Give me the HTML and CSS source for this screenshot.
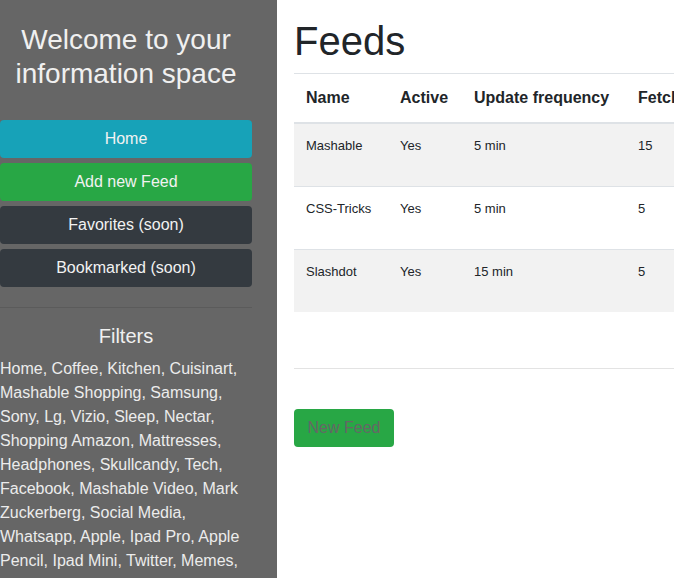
FILE: index.html
```html
<!DOCTYPE html>
<html lang="en">
<head>
<meta charset="utf-8">
<title>Feeds</title>
<link rel="stylesheet" href="styles.css">
</head>
<body>
<div class="app">
  <aside class="sidebar">
    <div class="side-inner">
      <h1 class="welcome">Welcome to your information space</h1>
      <nav class="nav">
        <a class="btn btn-info" href="#">Home</a>
        <a class="btn btn-success" href="#">Add new Feed</a>
        <a class="btn btn-dark" href="#">Favorites (soon)</a>
        <a class="btn btn-dark" href="#">Bookmarked (soon)</a>
      </nav>
      <hr class="side-rule">
      <h5 class="filters-title">Filters</h5>
      <p class="filters">Home, Coffee, Kitchen, Cuisinart, Mashable Shopping, Samsung, Sony, Lg, Vizio, Sleep, Nectar, Shopping Amazon, Mattresses, Headphones, Skullcandy, Tech, Facebook, Mashable Video, Mark Zuckerberg, Social Media, Whatsapp, Apple, Ipad Pro, Apple Pencil, Ipad Mini, Twitter, Memes,</p>
    </div>
  </aside>
  <main class="main">
    <h1 class="page-title">Feeds</h1>
    <table class="feeds">
      <thead>
        <tr>
          <th class="c-name">Name</th>
          <th class="c-active">Active</th>
          <th class="c-freq">Update frequency</th>
          <th class="c-fetch">Fetch count</th>
        </tr>
      </thead>
      <tbody>
        <tr class="odd">
          <td><div class="cell">Mashable</div></td>
          <td><div class="cell">Yes</div></td>
          <td><div class="cell">5 min</div></td>
          <td><div class="cell">15</div></td>
        </tr>
        <tr>
          <td><div class="cell">CSS-Tricks</div></td>
          <td><div class="cell">Yes</div></td>
          <td><div class="cell">5 min</div></td>
          <td><div class="cell">5</div></td>
        </tr>
        <tr class="odd">
          <td><div class="cell">Slashdot</div></td>
          <td><div class="cell">Yes</div></td>
          <td><div class="cell">15 min</div></td>
          <td><div class="cell">5</div></td>
        </tr>
      </tbody>
    </table>
    <div class="table-end"></div>
    <button class="btn btn-success new-feed" type="button">New Feed</button>
  </main>
</div>
</body>
</html>
```
FILE: styles.css
```css
* { box-sizing: border-box; }
html, body {
  margin: 0;
  height: 100%;
  overflow: hidden;
}
body {
  font-family: "Liberation Sans", Arial, sans-serif;
  font-size: 16px;
  line-height: 1.5;
  color: #212529;
  background: #fff;
}
.app {
  display: flex;
  height: 100vh;
}
.sidebar {
  width: 277px;
  flex: 0 0 277px;
  background: #666666;
  color: #ececec;
  overflow: hidden;
}
.side-inner {
  width: 252px;
  padding-top: 23px;
}
.welcome {
  margin: 0;
  font-size: 28px;
  font-weight: 400;
  line-height: 1.2;
  text-align: center;
  color: #f0f0f0;
}
.nav {
  display: flex;
  flex-direction: column;
  gap: 5px;
  margin-top: 30px;
}
.btn {
  display: block;
  font-family: inherit;
  font-size: 16px;
  line-height: 24px;
  padding: 6px 12px;
  border: 1px solid transparent;
  border-radius: 4px;
  text-align: center;
  text-decoration: none;
  color: #fff;
}
.btn-info { background: #17a2b8; color: #f2f2f2; }
.btn-success { background: #28a745; color: #f2f2f2; }
.btn-dark { background: #343a40; color: #f2f2f2; }
.side-rule {
  margin: 20px 0 16px;
  border: 0;
  border-top: 1px solid #5b5b5b;
}
.filters-title {
  margin: 0 0 9px;
  font-size: 20px;
  font-weight: 400;
  line-height: 1.2;
  text-align: center;
  color: #f0f0f0;
}
.filters {
  margin: 0;
  font-size: 16px;
  line-height: 24px;
  color: #ececec;
}
.main {
  flex: 1;
  min-width: 0;
  padding: 17px 0 0 17px;
  overflow: hidden;
}
.page-title {
  margin: 0 0 8px;
  font-size: 40px;
  font-weight: 400;
  line-height: 1.2;
  color: #212529;
}
.feeds {
  border-collapse: collapse;
  table-layout: fixed;
  width: 560px;
}
.feeds th, .feeds td {
  padding: 12px;
  text-align: left;
  vertical-align: top;
  border-top: 1px solid #dee2e6;
}
.feeds th {
  font-weight: 700;
  font-size: 16px;
  line-height: 24px;
  border-bottom: 2px solid #dee2e6;
  white-space: nowrap;
}
.feeds td {
  font-size: 13px;
  line-height: 19.5px;
}
.feeds thead + tbody tr:first-child td { border-top: 0; }
.cell { min-height: 38px; }
.feeds tr.odd td { background: #f2f2f2; }
.c-name { width: 94px; }
.c-active { width: 74px; }
.c-freq { width: 164px; }
.c-fetch { width: 228px; }
.table-end {
  width: 560px;
  height: 57px;
  border-bottom: 1px solid #e3e3e3;
}
.new-feed {
  margin-top: 40px;
  width: 100px;
  color: #666666;
  cursor: pointer;
}
```
